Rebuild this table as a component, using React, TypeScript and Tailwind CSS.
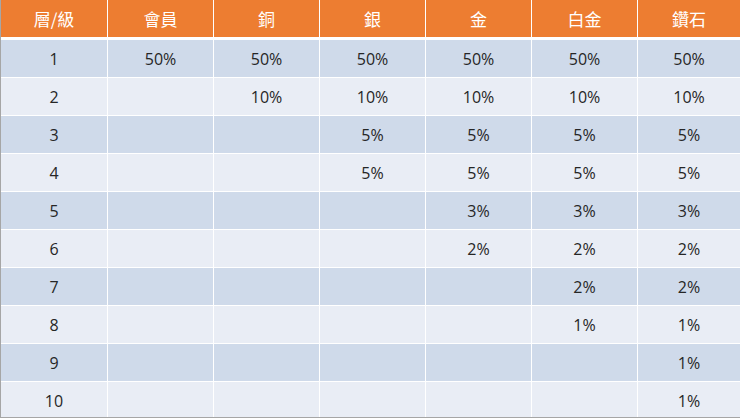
import React from "react";

const headers = ["層/級", "會員", "銅", "銀", "金", "白金", "鑽石"];

// value per level and the first tier column (1 = 會員) that gets it
const levels: { value: string; from: number }[] = [
  { value: "50%", from: 1 },
  { value: "10%", from: 2 },
  { value: "5%", from: 3 },
  { value: "5%", from: 3 },
  { value: "3%", from: 4 },
  { value: "2%", from: 4 },
  { value: "2%", from: 5 },
  { value: "1%", from: 5 },
  { value: "1%", from: 6 },
  { value: "1%", from: 6 },
];

export default function App() {
  return (
    <div className="w-[740px] h-[418px] overflow-hidden bg-white border-l border-b border-[#a6a6a6]">
      <div
        className="grid grid-cols-[106px_105px_105px_105px_105px_105px_1fr] gap-x-px bg-white"
        style={{ fontFamily: '"Open Sans", "Noto Sans CJK TC", sans-serif' }}
      >
        {headers.map((h) => (
          <div
            key={h}
            className="h-[37px] mb-[3px] flex items-center justify-center bg-[#ed7d31] text-white text-[17px]"
            style={{ fontFamily: '"Noto Sans CJK TC", sans-serif' }}
          >
            {h}
          </div>
        ))}
        {levels.map((lv, i) =>
          headers.map((_, c) => (
            <div
              key={`${i}-${c}`}
              className={`h-[37px] mb-px flex items-center justify-center text-[16px] text-[#262626] ${
                i % 2 === 0 ? "bg-[#cfdaea]" : "bg-[#e9edf5]"
              }`}
            >
              {c === 0 ? i + 1 : c >= lv.from ? lv.value : ""}
            </div>
          ))
        )}
      </div>
    </div>
  );
}
